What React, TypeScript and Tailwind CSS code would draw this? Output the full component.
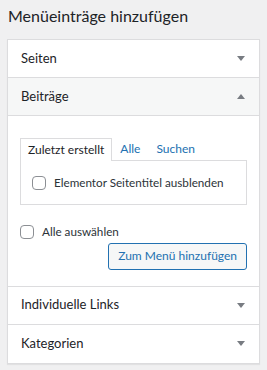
import React from 'react';

const Caret = ({ up = false }: { up?: boolean }) => (
  <svg width="8" height="5" viewBox="0 0 8 5" className="shrink-0">
    {up ? <path d="M0 5 L4 0 L8 5 Z" fill="#787c82" /> : <path d="M0 0 L8 0 L4 5 Z" fill="#787c82" />}
  </svg>
);

const Row = ({ label, open = false, last = false }: { label: string; open?: boolean; last?: boolean }) => (
  <div
    className={`flex h-[38px] items-center justify-between pl-[13px] pr-[14px] text-[13px] text-[#1d2327] ${
      open ? 'bg-[#f6f7f7]' : 'bg-white'
    } ${last ? '' : 'border-b border-[#dcdcde]'}`}
  >
    <span>{label}</span>
    <Caret up={open} />
  </div>
);

const Checkbox = () => (
  <span className="block h-[14px] w-[14px] shrink-0 rounded-[4px] border border-[#8c8f94] bg-white" />
);

export default function App() {
  return (
    <div className="min-h-[370px] w-[267px] bg-[#f0f0f1] pl-[7px] pt-[4px] font-['Lato',sans-serif]">
      <h2 className="h-[35px] pl-[1px] text-[16px] leading-[24px] text-[#1d2327]">Menüeinträge hinzufügen</h2>

      <div className="w-[253px] border border-[#dcdcde] bg-white shadow-[0_1px_1px_rgba(0,0,0,0.06)]">
        <Row label="Seiten" />
        <Row label="Beiträge" open />

        <div className="border-b border-[#dcdcde] px-[12px] pb-[16px] pt-[22px]">
          <div className="flex items-end text-[12px] leading-[20px]">
            <div className="relative -mb-px flex h-[23px] items-center border border-b-0 border-[#dcdcde] bg-white px-[7px] text-[#1d2327]">
              Zuletzt erstellt
            </div>
            <span className="ml-[8px] pb-[1px] text-[#2271b1]">Alle</span>
            <span className="ml-[16px] pb-[1px] text-[#2271b1]">Suchen</span>
          </div>
          <div className="flex h-[45px] items-center gap-[8px] border border-[#dcdcde] pl-[11px] text-[11.7px] text-[#2c3338]">
            <Checkbox />
            <span>Elementor Seitentitel ausblenden</span>
          </div>

          <div className="mt-[18px] flex items-center gap-[8px] text-[11.7px] text-[#2c3338]">
            <Checkbox />
            <span>Alle auswählen</span>
          </div>
          <div className="mt-[2px] flex justify-end">
            <button className="h-[27px] rounded-[3px] border border-[#2271b1] bg-[#f6f7f7] px-[9px] text-[12px] text-[#2271b1]">
              Zum Menü hinzufügen
            </button>
          </div>
        </div>

        <Row label="Individuelle Links" />
        <Row label="Kategorien" last />
      </div>
    </div>
  );
}
